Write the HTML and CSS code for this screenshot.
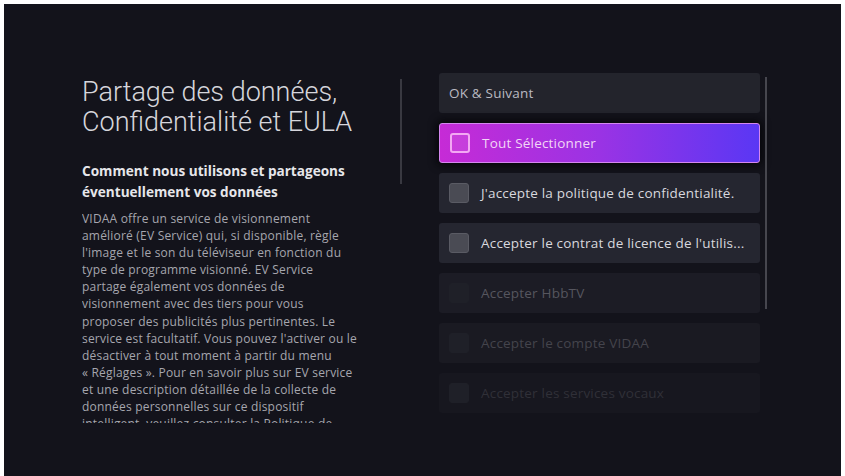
FILE: index.html
```html
<!DOCTYPE html>
<html lang="fr">
<head>
    <meta charset="UTF-8">
    <title>Partage des données</title>
    <link rel="stylesheet" href="styles.css">
</head>
<body>
    <div class="screen">
        <div class="info">
            <h1 class="title">Partage des données,<br>Confidentialité et EULA</h1>
            <h2 class="subtitle">Comment nous utilisons et partageons<br>éventuellement vos données</h2>
            <div class="body">
                <p>VIDAA offre un service de visionnement<br>
                amélioré (EV Service) qui, si disponible, règle<br>
                l'image et le son du téléviseur en fonction du<br>
                type de programme visionné. EV Service<br>
                partage également vos données de<br>
                visionnement avec des tiers pour vous<br>
                proposer des publicités plus pertinentes. Le<br>
                service est facultatif. Vous pouvez l'activer ou le<br>
                désactiver à tout moment à partir du menu<br>
                « Réglages ». Pour en savoir plus sur EV service<br>
                et une description détaillée de la collecte de<br>
                données personnelles sur ce dispositif<br>
                intelligent, veuillez consulter la Politique de<br>
                confidentialité.</p>
            </div>
        </div>
        <div class="divider"></div>
        <ul class="list">
            <li class="item plain">OK &amp; Suivant</li>
            <li class="item selected"><span class="box"></span>Tout Sélectionner</li>
            <li class="item"><span class="box"></span>J'accepte la politique de confidentialité.</li>
            <li class="item"><span class="box"></span>Accepter le contrat de licence de l'utilis...</li>
            <li class="item dim1"><span class="box"></span>Accepter HbbTV</li>
            <li class="item dim2"><span class="box"></span>Accepter le compte VIDAA</li>
            <li class="item dim3"><span class="box"></span>Accepter les services vocaux</li>
        </ul>
        <div class="scrollbar"></div>
    </div>
</body>
</html>
```

FILE: styles.css
```css
* {
    margin: 0;
    padding: 0;
    list-style: none;
    box-sizing: border-box;
}
body {
    background: #fff;
    padding: 4px 4px 0 4px;
    font-family: "Open Sans", Roboto, sans-serif;
}
.screen {
    display: flex;
    align-items: flex-start;
    height: 472px;
    padding: 69px 0 0 78px;
    background: #13131b;
    overflow: hidden;
}
.info {
    width: 290px;
    margin-top: 4px;
}
.title {
    font-family: Roboto, sans-serif;
    font-size: 27px;
    font-weight: 300;
    line-height: 30px;
    color: #d6d6dc;
}
.subtitle {
    margin-top: 23px;
    font-size: 13.6px;
    font-weight: 700;
    line-height: 21px;
    color: #e6e6ea;
}
.body {
    margin-top: 8px;
    height: 213px;
    overflow: hidden;
    font-size: 12px;
    letter-spacing: 0.2px;
    line-height: 17.1px;
    color: #a6a6ae;
    white-space: nowrap;
}
.divider {
    width: 2px;
    height: 105px;
    margin: 6px 0 0 28px;
    background: #393941;
}
.list {
    display: flex;
    flex-direction: column;
    gap: 10px;
    width: 321px;
    margin-left: 37px;
}
.item {
    display: flex;
    align-items: center;
    height: 40px;
    padding-left: 10px;
    border-radius: 3px;
    background: #252630;
    font-size: 13.5px;
    letter-spacing: 0.2px;
    color: #d8d8de;
    white-space: nowrap;
}
.item .box {
    width: 20px;
    height: 20px;
    margin-right: 12px;
    border-radius: 3px;
    background: #4a4b54;
    border: 1px solid #5a5b64;
}
.plain {
    background: #23242c;
    font-size: 13.5px;
    color: #babac2;
}
.selected {
    background: linear-gradient(90deg, #c62bd6 0%, #9a33e4 50%, #5a37f4 100%);
    border: 1px solid #d487ee;
    color: #f2d6f6;
    box-shadow: 0 0 8px 2px #050508;
}
.selected .box {
    background: rgba(255, 200, 255, 0.12);
    border: 2px solid #f3a8f3;
}
.dim1 {
    background: #1c1c25;
    color: #56565f;
}
.dim2 {
    background: #1a1a22;
    color: #44444c;
}
.dim3 {
    background: #17171f;
    color: #303038;
}
.dim1 .box,
.dim2 .box,
.dim3 .box {
    background: #1f2028;
    border-color: #1f2028;
}
.scrollbar {
    width: 2px;
    height: 232px;
    margin: 4px 0 0 5px;
    background: #46464e;
}
```
